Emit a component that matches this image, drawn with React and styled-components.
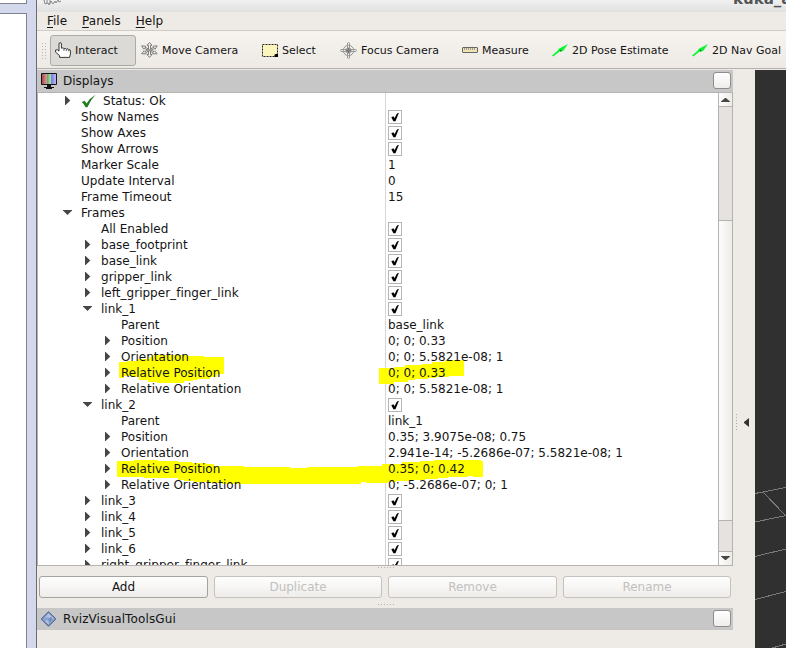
import React from "react";
import styled, { createGlobalStyle } from "styled-components";

const Global = createGlobalStyle`
  * { box-sizing: border-box; }
  body { margin: 0; overflow: hidden; background: #fff; }
`;

const Screen = styled.div`
  display: flex;
  width: 786px;
  height: 648px;
  overflow: hidden;
  font: 12px/16px "DejaVu Sans", sans-serif;
  color: #141414;
  white-space: nowrap;
`;

/* window frame at the far left */
const Outer = styled.div`
  display: flex;
  flex-direction: column;
  width: 37px;
  flex: none;
  background: #d3d8ec;
  border-right: 1px solid #6c6c6c;
`;
const Pane = styled.div`
  width: 27px;
  height: ${(p) => (p.$top ? "4px" : "635px")};
  margin-bottom: ${(p) => (p.$top ? "9px" : 0)};
  background: #fff;
  border-right: 1px solid #80838f;
  ${(p) => (p.$top ? "border-bottom" : "border-top")}: 1px solid #80838f;
`;

const Main = styled.div`
  display: flex;
  flex-direction: column;
  flex: 1;
  min-width: 0;
  background: #eeeae5;
`;
const TitleBar = styled.div`
  display: flex;
  justify-content: space-between;
  height: 12px;
  flex: none;
  overflow: hidden;
  background: linear-gradient(#f1f1f1, #e0e0e0);
`;
const WindowTitle = styled.div`
  width: 53px;
  margin-top: -9px;
  overflow: hidden;
  font: bold 15px/17px "DejaVu Sans", sans-serif;
  color: #555;
`;
const MenuBar = styled.div`
  display: flex;
  gap: 15px;
  height: 19px;
  flex: none;
  padding: 1px 0 0 10px;
  border-bottom: 1px solid #cfccc8;
`;
const MenuItem = styled.span`
  display: block;
  &::first-letter { text-decoration: underline; text-underline-offset: 2px; }
`;
const ToolBar = styled.div`
  display: flex;
  align-items: center;
  height: 38px;
  flex: none;
  padding-top: 1px;
  background: linear-gradient(#f7f4ef, #edeae6);
  border-bottom: 1px solid #b3b0ad;
  font-size: 11px;
`;
const Grip = styled.div`
  width: 6px;
  height: 17px;
  flex: none;
  margin: 0 3px 0 4px;
  background: radial-gradient(circle, #b9b5b0 0.8px, transparent 1px) 0 0 / 3px 3px;
`;
const Tool = styled.div`
  display: flex;
  align-items: center;
  width: ${(p) => p.$w}px;
  height: 31px;
  flex: none;
  gap: 4px;
  padding-left: 4px;
  border: 1px solid ${(p) => (p.$active ? "#adaba8" : "transparent")};
  border-radius: 3px;
  background: ${(p) => (p.$active ? "#dcdad6" : "none")};
  svg { flex: none; }
`;
const ToolLabel = styled.span`
  padding-top: 2px;
`;

const Body = styled.div`
  display: flex;
  flex: 1;
  min-height: 0;
  padding-top: 1px;
`;
const Docks = styled.div`
  display: flex;
  flex-direction: column;
  width: 696px;
  flex: none;
`;
const DockTitle = styled.div`
  display: flex;
  align-items: center;
  height: 22px;
  flex: none;
  padding: 0 2px 0 4px;
  gap: 6px;
  background: #c7c7c7;
  letter-spacing: ${(p) => p.$ls || 0}px;
  svg { flex: none; }
  span { flex: 1; }
`;
const FloatButton = styled.div`
  width: 18px;
  height: 17px;
  margin-bottom: 1px;
  border: 1px solid #8f8d8b;
  border-radius: 3px;
  background: linear-gradient(#fff, #efedeb);
`;
const TreeFrame = styled.div`
  position: relative;
  display: flex;
  height: 474px;
  flex: none;
  overflow: hidden;
  background: #fff;
  border: 1px solid #b5b3b0;
`;
const Tree = styled.div`
  width: 680px;
  flex: none;
  overflow: hidden;
`;
const TreeRow = styled.div`
  display: grid;
  grid-template-columns: 348px 1fr;
  height: 16px;
`;
const NameCell = styled.div`
  display: flex;
  align-items: center;
  padding-left: ${(p) => 23 + p.$level * 20}px;
  border-right: 1px solid #d6d6d6;
  height: 16px;
  letter-spacing: 0.02px;
  span { position: relative; z-index: 2; }
`;
const Branch = styled.div`
  display: flex;
  align-items: center;
  width: 20px;
  height: 15px;
  margin-bottom: 1px;
  flex: none;
  position: relative;
  z-index: 2;
`;
const Status = styled.svg`
  flex: none;
  margin-right: 6px;
`;
const ValueCell = styled.div`
  height: 16px;
  padding-left: 2px;
  span { position: relative; z-index: 2; }
`;
const CheckBox = styled.div`
  display: flex;
  width: 14px;
  height: 14px;
  margin-top: 1px;
  border: 1px solid #b7b4b1;
  background: #fff;
`;
const Scroll = styled.div`
  display: flex;
  flex-direction: column;
  width: 14px;
  border-left: 1px solid #b5b3b0;
  background: #e6e2df;
`;
const Arrow = styled.div`
  display: flex;
  align-items: center;
  justify-content: center;
  height: 14px;
  flex: none;
  padding-bottom: ${(p) => (p.$up ? 0 : 2)}px;
  background: linear-gradient(90deg, #fdfdfc, #eeece9);
  ${(p) => (p.$up ? "border-bottom" : "border-top")}: 1px solid #b5b3b0;
`;
const Thumb = styled.div`
  height: 301px;
  margin: 113px 0 30px;
  flex: none;
  background: linear-gradient(90deg, #fdfdfc, #eeece9);
  border: solid #b5b3b0;
  border-width: 1px 0;
`;
const Marker = styled.svg`
  position: absolute;
  left: 0;
  top: 0;
  z-index: 1;
  pointer-events: none;
`;
const SplitH = styled.div`
  width: 17px;
  height: 2px;
  flex: none;
  margin: ${(p) => p.$m};
  background: repeating-linear-gradient(90deg, #b7b3ae 0 1px, transparent 1px 3px) 0 0 / 100% 1px no-repeat;
`;
const Buttons = styled.div`
  display: grid;
  grid-template-columns: 169px 168px 169px 168px;
  gap: 6px;
  height: 22px;
  flex: none;
  padding-left: 2px;
`;
const PushButton = styled.div`
  display: flex;
  align-items: center;
  justify-content: center;
  border: 1px solid ${(p) => (p.$disabled ? "#c4c1be" : "#a5a3a0")};
  border-radius: 3px;
  background: linear-gradient(#fefefe, #efedea);
  color: ${(p) => (p.$disabled ? "#c2c0be" : "#141414")};
`;
const Splitter = styled.div`
  display: flex;
  align-items: center;
  width: 22px;
  height: 50px;
  flex: none;
  margin-top: 327px;
  padding-left: 3px;
  gap: 7px;
`;
const SplitV = styled.div`
  width: 1px;
  height: 17px;
  background: repeating-linear-gradient(#aaa6a2 0 1px, transparent 1px 3px);
`;
const View = styled.div`
  width: 31px;
  flex: none;
  background: #303030;
  svg { display: block; }
`;

const HandIcon = () => (
  <svg width="16" height="16" viewBox="0 0 16 16">
    <path d="M4 8.5V2Q4 .6 5.2 .6T6.4 2V6.2Q8.8 5.2 9 6.8Q11 5.8 11.4 7.2Q13.5 6.2 13.8 7.6Q15.4 7.2 15.4 9V12L14.6 15.4H4.6V13.6L.6 10.2V8Q2.2 6.8 4 9.2Z" fill="#fff" stroke="#222" strokeWidth=".9" />
    <path d="M8.9 7V8.8M11.3 7.3V9M13.7 7.8V9.2" stroke="#333" strokeWidth=".8" fill="none" />
  </svg>
);
const MoveIcon = () => (
  <svg width="17" height="16" viewBox="0 0 17 16" fill="#f7f5f1" stroke="#5e5e5e" strokeWidth=".8">
    <path d="M.7 3.8L4.6 4.3L3.9 5.2L13 9.6L13.7 8.8L16.1 11.8L11.8 11.8L12.4 10.8L3.3 6.4L2.7 7.2Z" />
    <path d="M16.1 3.8L12.2 4.3L12.9 5.2L3.8 9.6L3.1 8.8L.7 11.8L5 11.8L4.4 10.8L13.5 6.4L14.1 7.2Z" />
    <path d="M8.5 .5L11 3.3H9.5V12.5H11L8.5 15.4L6 12.5H7.5V3.3H6Z" />
    <path d="M6.5 7H10.5V9.5H6.5Z" fill="#999" stroke="none" />
  </svg>
);
const SelectIcon = () => (
  <svg width="16" height="13" viewBox="0 0 16 13">
    <path d="M.5 .5H15.5V12.5H.5Z" fill="#fcf5be" stroke="#222" strokeDasharray="2 1" />
    <path d="M16 9.5V13H12.5V10.5Z" />
  </svg>
);
const FocusIcon = () => (
  <svg width="17" height="17" viewBox="0 0 17 17" fill="none" stroke="#929292">
    <circle cx="8.5" cy="8.5" r="5.2" />
    <circle cx="8.5" cy="8.5" r="2.7" />
    <path d="M7.5 16V1L8.5 .4L9.5 1V16L8.5 16.6ZM1 7.5H16L16.6 8.5L16 9.5H1L.4 8.5Z" strokeWidth=".9" />
    <path d="M6 8.5H11M8.5 6V11" stroke="#777" />
  </svg>
);
const RulerIcon = () => (
  <svg width="16" height="6" viewBox="0 0 16 6">
    <rect x=".5" y=".5" width="15" height="5" rx=".5" fill="#f1e4ae" stroke="#666" />
    <path d="M2.5 1V3M4.5 1V3M6.5 1V3M8.5 1V3M10.5 1V3M12.5 1V3" stroke="#999" />
  </svg>
);
const GreenArrow = () => (
  <svg width="16" height="13" viewBox="0 0 16 13">
    <path d="M16 0L11.5 6.5L9.2 7.8L7.6 7.6L1.3 12.4L0 11.6L5.8 6.4L6.8 4.8Z" fill="#0cf631" />
    <path d="M7.4 6.6L9 5.6L9.6 6.6L8.4 7.4Z" fill="#087c20" />
  </svg>
);
const MonitorIcon = () => (
  <svg width="16" height="16" viewBox="0 0 16 16">
    <defs>
      <linearGradient id="mr" x2="1"><stop stopColor="#a14d4d" /><stop offset="1" stopColor="#e19b9b" /></linearGradient>
      <linearGradient id="mg" x2="1"><stop stopColor="#5aa659" /><stop offset="1" stopColor="#b1e8b1" /></linearGradient>
      <linearGradient id="mb" x2="1"><stop stopColor="#7777d9" /><stop offset="1" stopColor="#b8b8ff" /></linearGradient>
    </defs>
    <rect width="16" height="12" rx="1" fill="#151515" />
    <rect x="1" y="1" width="5" height="10" fill="url(#mr)" />
    <rect x="6" y="1" width="4" height="10" fill="url(#mg)" />
    <rect x="10" y="1" width="5" height="10" fill="url(#mb)" />
    <path d="M6 12H10V14H13V15H11V16H5V15H3V14H6Z" fill="#151515" />
  </svg>
);
const DiamondIcon = () => (
  <svg width="16" height="16" viewBox="0 0 16 16">
    <path d="M7.5 .8L14.8 8L7.5 15.2L.4 8Z" fill="#8ca4ce" stroke="#334f87" />
    <path d="M7.5 2.4L13.2 8L9 8.5L7 6L3.5 7ZM6 9L8 11L7.5 13.4L4 10Z" fill="#b2c1df" />
    <path d="M7.3 8L10 5.8L11.7 8L8.5 12Z" fill="#748fc0" />
  </svg>
);
const CheckMark = () => (
  <svg width="12" height="12"><path d="M2.3 6.2L4.6 5.2L5.4 7.2L8 2.4L9.9 1.7L6.5 10.3H4.4Z" fill="#050505" /></svg>
);

const CHECK = true;
const rows = [
  [0, "right", "Status: Ok", null, true],
  [0, "", "Show Names", CHECK],
  [0, "", "Show Axes", CHECK],
  [0, "", "Show Arrows", CHECK],
  [0, "", "Marker Scale", "1"],
  [0, "", "Update Interval", "0"],
  [0, "", "Frame Timeout", "15"],
  [0, "down", "Frames", null],
  [1, "", "All Enabled", CHECK],
  [1, "right", "base_footprint", CHECK],
  [1, "right", "base_link", CHECK],
  [1, "right", "gripper_link", CHECK],
  [1, "right", "left_gripper_finger_link", CHECK],
  [1, "down", "link_1", CHECK],
  [2, "", "Parent", "base_link"],
  [2, "right", "Position", "0; 0; 0.33"],
  [2, "right", "Orientation", "0; 0; 5.5821e-08; 1"],
  [2, "right", "Relative Position", "0; 0; 0.33"],
  [2, "right", "Relative Orientation", "0; 0; 5.5821e-08; 1"],
  [1, "down", "link_2", CHECK],
  [2, "", "Parent", "link_1"],
  [2, "right", "Position", "0.35; 3.9075e-08; 0.75"],
  [2, "right", "Orientation", "2.941e-14; -5.2686e-07; 5.5821e-08; 1"],
  [2, "right", "Relative Position", "0.35; 0; 0.42"],
  [2, "right", "Relative Orientation", "0; -5.2686e-07; 0; 1"],
  [1, "right", "link_3", CHECK],
  [1, "right", "link_4", CHECK],
  [1, "right", "link_5", CHECK],
  [1, "right", "link_6", CHECK],
  [1, "right", "right_gripper_finger_link", CHECK],
];

const tools = [
  ["Interact", HandIcon, 86],
  ["Move Camera", MoveIcon, 121],
  ["Select", SelectIcon, 78],
  ["Focus Camera", FocusIcon, 122],
  ["Measure", RulerIcon, 90],
  ["2D Pose Estimate", GreenArrow, 140],
  ["2D Nav Goal", GreenArrow, 99],
];

function Row({ level, branch, name, value, status }) {
  return (
    <TreeRow>
      <NameCell $level={level}>
        <Branch>
          {branch === "right" && <svg width="10" height="9" viewBox="-4 0 10 9"><path d="M0 0H.6L5.3 4.5L.6 9H0Z" fill="#464646" /></svg>}
          {branch === "down" && <svg width="12" height="5" viewBox="-2 0 12 5"><path d="M0 0H9V.5L4.5 5L0 .5Z" fill="#464646" /></svg>}
        </Branch>
        {status && (
          <Status width="16" height="16" viewBox="0 0 16 16">
            <path d="M.8 9L3.7 7.8L5.6 10.4Q9 5 14.5 1.8Q9.5 7 6.4 14.2H4.6Q3 10.8 .8 9Z" fill="#1c7d20" />
          </Status>
        )}
        <span>{name}</span>
      </NameCell>
      <ValueCell>{value === CHECK ? <CheckBox><CheckMark /></CheckBox> : <span>{value}</span>}</ValueCell>
    </TreeRow>
  );
}

export default function App() {
  return (
    <Screen>
      <Global />
      <Outer><Pane $top /><Pane /></Outer>
      <Main>
        <TitleBar>
          <svg width="30" height="6" viewBox="0 0 30 6" fill="none" stroke="#888">
            <path d="M7 0L8 4L11 3L12 5L14 1L16 4L18 1L19 3L21 0L22 2L24 1M10 0V3M13 0V4" />
          </svg>
          <WindowTitle>kuka_arm</WindowTitle>
        </TitleBar>
        <MenuBar><MenuItem>File</MenuItem><MenuItem>Panels</MenuItem><MenuItem>Help</MenuItem></MenuBar>
        <ToolBar>
          <Grip />
          {tools.map(([label, Icon, w], i) => (
            <Tool key={label} $w={w} $active={i === 0}><Icon /><ToolLabel>{label}</ToolLabel></Tool>
          ))}
        </ToolBar>
        <Body>
          <Docks>
            <DockTitle><MonitorIcon /><span>Displays</span><FloatButton /></DockTitle>
            <TreeFrame>
              <Tree>
                {rows.map(([level, branch, name, value, status], i) => (
                  <Row key={i} level={level} branch={branch} name={name} value={value} status={status} />
                ))}
              </Tree>
              <Scroll>
                <Arrow $up><svg width="9" height="4"><path d="M0 4V3.4L4 0H5L9 3.4V4Z" fill="#464646" /></svg></Arrow>
                <Thumb />
                <Arrow><svg width="9" height="4"><path d="M0 0V.6L4 4H5L9 .6V0Z" fill="#464646" /></svg></Arrow>
              </Scroll>
              <Marker width="680" height="472" viewBox="38 93 680 472" fill="#ff0">
                <path d="M119 362H127V361H138V359H149V357H153V355H188V356H204V357H224V374H217V377H210V379H198V380H193V381H184V383H157V382H148V380H139V377H132V376H124V378H119Z" />
                <path d="M379 368H394V367H405V365H422V364H432V362H445V360H464V376H449V377H436V378H428V379H415V380H408V382H394V384H379Z" />
                <path d="M117 461H134V460H158V461H178V462H192V463H206V464H214V466H244V467H290V468H307V467H358V466H382V464H402V462H420V461H434V460H481V461H483V477H473V476H468V477H448V478H438V479H425V480H411V481H396V482H388V483H366V482H361V484H222V483H208V482H194V481H184V480H178V478H144V477H117Z" />
              </Marker>
            </TreeFrame>
            <SplitH $m="1px 0 7px 341px" />
            <Buttons>
              <PushButton>Add</PushButton>
              <PushButton $disabled>Duplicate</PushButton>
              <PushButton $disabled>Remove</PushButton>
              <PushButton $disabled>Rename</PushButton>
            </Buttons>
            <SplitH $m="6px 0 2px 341px" />
            <DockTitle $ls={0.12}><DiamondIcon /><span>RvizVisualToolsGui</span><FloatButton /></DockTitle>
          </Docks>
          <Splitter>
            <SplitV />
            <svg width="5" height="9"><path d="M5 0V9L0 5V4Z" fill="#333" /></svg>
          </Splitter>
          <View>
            <svg width="31" height="578" viewBox="755 70 31 578" fill="none" stroke="#7a7a7a" strokeWidth="1" shapeRendering="crispEdges">
              <path d="M755 493.5L786 487.5M763 492L786 516M755 522L786 515.5M755 556.5L786 549M755 599.5L786 591.5M772 648L786 644" />
            </svg>
          </View>
        </Body>
      </Main>
    </Screen>
  );
}
